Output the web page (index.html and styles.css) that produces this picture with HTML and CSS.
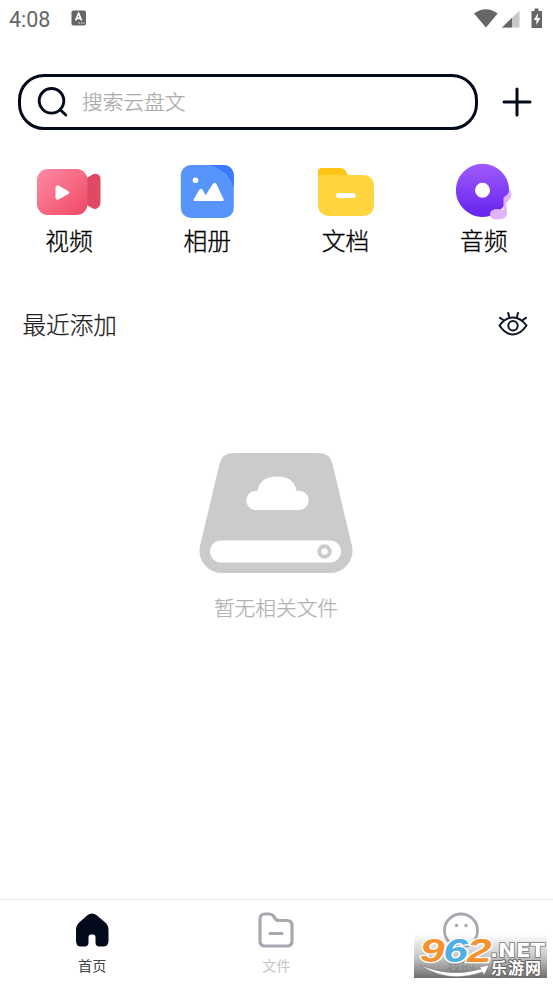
FILE: index.html
```html
<!DOCTYPE html>
<html lang="zh-CN">
<head>
<meta charset="utf-8">
<meta name="viewport" content="width=device-width">
<title>云盘</title>
<link rel="stylesheet" href="styles.css">
</head>
<body>
<div class="app">
  <header class="status">
    <span class="clock">4:08</span>
    <svg class="status-app" width="16" height="16" viewBox="0 0 16 16"><rect x=".5" y=".5" width="14.5" height="15" rx="1.8" fill="#666"/><path d="M4.6 10.5 7.6 3.5l3 7M5.8 8.3h3.6" fill="none" stroke="#fff" stroke-width="1.7"/><path d="M7.5 13h1.4m1 0h1.4m1 0h1.2" stroke="#fff" stroke-width="1.2"/></svg>
    <svg class="status-icons" width="70" height="22" viewBox="0 0 70 22"><path d="M0 5.500Q11.800-3 23.700 5.500L12 19.500Z" fill="#666"/><path d="M28 19.500 45.500 2.500v17Z" fill="#c8c8c8"/><path d="M28 19.500 38 9.800v9.700Z" fill="#666"/><path d="M57.500 3h3V.500h4V3h3.500v17H57.500Z" fill="#666"/><path d="m64 5-4.200 7h2.600v5l4-7h-2.800Z" fill="#fff"/></svg>
  </header>

  <div class="search-row">
    <div class="search">
      <svg width="32" height="32" viewBox="0 0 32 32" fill="none" stroke="#030a1c" stroke-width="2.900" stroke-linecap="round"><circle cx="14.500" cy="14.800" r="12.300"/><path d="m23.500 24 5.300 5"/></svg>
      <span class="placeholder">搜索云盘文</span>
    </div>
    <svg class="plus" width="30" height="30" viewBox="0 0 30 30" stroke="#030a1c" stroke-width="3" stroke-linecap="round"><path d="M15 2v26M2 15h26"/></svg>
  </div>

  <nav class="categories">
    <div class="category">
      <svg width="66" height="58" viewBox="0 0 66 58">
        <defs><linearGradient id="pink" x1="0" y1="0" x2="1" y2="1"><stop offset="0" stop-color="#ff8ba5"/><stop offset="1" stop-color="#ee4865"/></linearGradient></defs>
        <path d="M49 16 56.500 11.500Q58.500 10.500 61 11Q64.500 12 64.500 16V39Q64.500 43 61 45.500Q58.500 46.500 56 45L49 41Z" fill="#df4963"/>
        <rect x="1" y="6" width="50.500" height="46" rx="11" fill="url(#pink)"/>
        <path d="M19.500 24.500c0-1.900 1.700-2.600 3.300-1.700l9.200 5.200c1.600.9 1.600 2.400 0 3.200l-9.200 5.100c-1.600.9-3.300.2-3.300-1.700Z" fill="#fff"/>
      </svg>
      <span>视频</span>
    </div>
    <div class="category">
      <svg width="54" height="58" viewBox="0 0 54 58">
        <defs><clipPath id="photo"><rect x=".8" y="2" width="53" height="53" rx="10"/></clipPath></defs>
        <g clip-path="url(#photo)"><path fill="#5794fc" d="M0 0h54v58H0z"/><path fill="#397bfc" d="M29 2h25v23C50 13 42 5 29 2Z"/></g>
        <circle cx="15.500" cy="17.200" r="2.800" fill="#fff"/>
        <path d="m14.500 37 5.700-9.700q.8-1 1.600 0l3.700 7 8.300-13q.8-1 1.600 0L42.800 37Z" fill="#fff" stroke="#fff" stroke-width="2" stroke-linejoin="round"/>
      </svg>
      <span>相册</span>
    </div>
    <div class="category">
      <svg width="56" height="58" viewBox="0 0 56 58">
        <path d="M0 14V9q0-4 4-4h19q3 0 4.500 2.500l4 7.500V23H0Z" fill="#ffc415"/>
        <path d="M0 14q0-2 2-2h42q12 0 12 12v17q0 12-12 12H12Q0 53 0 41Z" fill="#ffd53f"/>
        <rect x="18" y="30" width="19.500" height="5" rx="2.500" fill="#fff"/>
      </svg>
      <span>文档</span>
    </div>
    <div class="category">
      <svg width="56" height="58" viewBox="0 0 56 58">
        <defs><linearGradient id="violet" x1="0" y1="0" x2="0" y2="1"><stop offset="0" stop-color="#a05bfc"/><stop offset="1" stop-color="#6523ee"/></linearGradient></defs>
        <circle cx="26.500" cy="27.300" r="26.600" fill="url(#violet)"/><circle cx="26.500" cy="27.300" r="7.500" fill="#fff"/>
        <path d="M47.500 34.500Q53.500 31 54.500 26.500q2 6-.5 9.500l-4 4.200Q51 47 51 51q-1 5.500-9 5.500-8 0-8-5 0-5.500 8-5.500 4 0 5.500 1.500Z" fill="#e2b2fb"/>
      </svg>
      <span>音频</span>
    </div>
  </nav>

  <section class="recent">
    <h1>最近添加</h1>
    <svg width="30" height="26" viewBox="0 0 30 26" fill="none" stroke="#101626" stroke-width="2" stroke-linecap="round"><path d="M1.500 14.500Q7.500 6.500 15 6.500t13.500 8Q22.500 23.500 15 23.500T1.500 14.500Z"/><circle cx="15" cy="14.800" r="4.700"/><path d="M11.300 6.300 10.200 2M18.800 6.300 20 2M5.300 9 2 6.800M24.700 9 28 6.800"/></svg>
  </section>

  <main class="empty">
    <svg width="154" height="120" viewBox="0 0 154 120">
      <path d="M34 0h86q11 0 13.500 11L153 93q2 10-4 18-7 9-18 9H23q-11 0-18-9-6-8-4-18L20.500 11Q23 0 34 0Z" fill="#cbcbcb"/>
      <path d="M55.500 57a9.700 9.700 0 0 1 3-19.200Q61 23.500 78 23.500T97.500 37.800H100a9.600 9.600 0 0 1 0 19.200Z" fill="#fff"/>
      <rect x="11" y="87.500" width="131" height="22" rx="11" fill="#fff"/>
      <circle cx="125.500" cy="98.500" r="5.200" fill="none" stroke="#cbcbcb" stroke-width="4"/>
    </svg>
    <p>暂无相关文件</p>
  </main>

  <nav class="tabs">
    <div class="tab active">
      <svg width="38" height="38" viewBox="0 0 38 38"><path d="M14 3.600q5-4 10 0l8 6.600q3.500 3 3.500 7.500V29q0 5.500-5.500 5.500h-3.500q-4 0-4-4V25q0-2.500-2-2.500h-3q-2 0-2 2.500v5.500q0 4-4 4H8q-5 0-5-5.500V17.700q0-4.500 3.500-7.500Z" fill="#030a1c"/></svg>
      <span>首页</span>
    </div>
    <div class="tab">
      <svg width="38" height="38" viewBox="0 0 38 38" fill="none" stroke="#a8a9b0" stroke-width="3.200" stroke-linecap="round" stroke-linejoin="round"><path d="M3 29V7q0-5 5-5h4q3 0 4.500 2l2 3Q19.500 8.500 22 8.500h8q5 0 5 5V29q0 5-5 5H8q-5 0-5-5ZM13 21.500h12"/></svg>
      <span>文件</span>
    </div>
    <div class="tab">
      <svg width="38" height="38" viewBox="0 0 38 38"><circle cx="19" cy="18.500" r="16.500" fill="none" stroke="#a8a9b0" stroke-width="2.800"/><circle cx="14.500" cy="13.500" r="1.700" fill="#a8a9b0"/><circle cx="24" cy="13.500" r="1.700" fill="#a8a9b0"/></svg>
      <span>我的</span>
    </div>
  </nav>

  <svg class="watermark" width="133" height="44" viewBox="0 0 133 44">
    <defs>
      <linearGradient id="shade" x1="0" y1="0" x2="0" y2="1"><stop offset="0" stop-color="#777" stop-opacity="0"/><stop offset=".5" stop-color="#777" stop-opacity=".4"/><stop offset="1" stop-color="#666" stop-opacity=".95"/></linearGradient>
    </defs>
    <rect width="133" height="44" fill="url(#shade)"/>
    <path d="M6 31Q36 44 67 35L65.500 33 75 31 70 41 68.500 38Q34 50 6 31Z" fill="#fff" stroke="#777" stroke-width=".5"/>
    <g class="brand-number" transform="translate(6 27.500) scale(1.340 1)"><text x="0" y="0">9</text><text class="blue" x="17.300" y="0">6</text><text x="35" y="0">2</text></g>
    <text class="brand-net" x="76" y="23" textLength="55" lengthAdjust="spacingAndGlyphs">.NET</text>
    <text class="brand-cn" x="77" y="39.500" textLength="50">乐游网</text>
  </svg>
</div>
</body>
</html>
```
FILE: styles.css
```css
* { box-sizing: border-box; }
body { margin: 0; background: #fff; font-family: "Noto Sans CJK SC", sans-serif; }
svg { display: block; flex: none; }
.app { position: relative; display: flex; flex-direction: column; height: 984px; overflow: hidden; }

.status { display: flex; height: 40px; padding: 8px 9px 0 9px; }
.clock { width: 62px; font: 21.5px/23px Roboto, sans-serif; color: #666; }
.status-app { margin-top: 2px; }
.status-icons { margin-left: auto; }

.search-row { display: flex; align-items: center; justify-content: space-between; margin-top: 34px; padding: 0 21px 0 17.5px; height: 56px; }
.search { display: flex; align-items: center; gap: 13px; width: 460px; height: 56px; padding-left: 16.5px; border: 3px solid #030a1c; border-radius: 26px; }
.placeholder { margin-top: -2px; font-size: 20.7px; line-height: 30px; font-weight: 300; color: #aaa; -webkit-text-stroke: .25px #aaa; }
.plus { margin-top: -1px; }

.categories { display: grid; grid-template-columns: repeat(4, 1fr); margin-top: 33px; }
.category { display: flex; flex-direction: column; align-items: center; font-size: 23.8px; line-height: 37px; font-weight: 300; color: #000; -webkit-text-stroke: .3px #000; }

.recent { display: flex; align-items: center; justify-content: space-between; height: 36px; margin-top: 48px; padding: 0 25px 0 22.5px; }
.recent h1 { margin: 0; font-size: 23.6px; line-height: 36px; font-weight: 300; color: #222; -webkit-text-stroke: .25px #222; }

.empty { flex: 1; display: flex; flex-direction: column; align-items: center; padding: 111px 1px 0 0; }
.empty p { margin: 19px 0 0; font-size: 20.7px; line-height: 30px; font-weight: 300; color: #b2b2b2; -webkit-text-stroke: .25px #b2b2b2; }

.tabs { display: grid; grid-template-columns: repeat(3, 1fr); height: 85px; padding-top: 12px; border-top: 1px solid #ebebeb; }
.tab { display: flex; flex-direction: column; align-items: center; gap: 5px; font-size: 14.2px; line-height: 20px; color: #c5c5c5; }
.tab.active { color: #444; }

.watermark { position: absolute; left: 414px; top: 934px; }
.brand-number { font: italic bold 33px "Liberation Sans", sans-serif; fill: #f6922d; stroke: #fff; stroke-width: 2.5px; paint-order: stroke; }
.brand-number .blue { fill: #4eafe5; }
.brand-net { font: bold 19px "DejaVu Sans", sans-serif; fill: #fff; stroke: #777; stroke-width: 1.5px; paint-order: stroke; }
.brand-cn { font: bold 16px "Noto Sans CJK SC", sans-serif; fill: #fff; stroke: #666; stroke-width: 2px; paint-order: stroke; }
```
